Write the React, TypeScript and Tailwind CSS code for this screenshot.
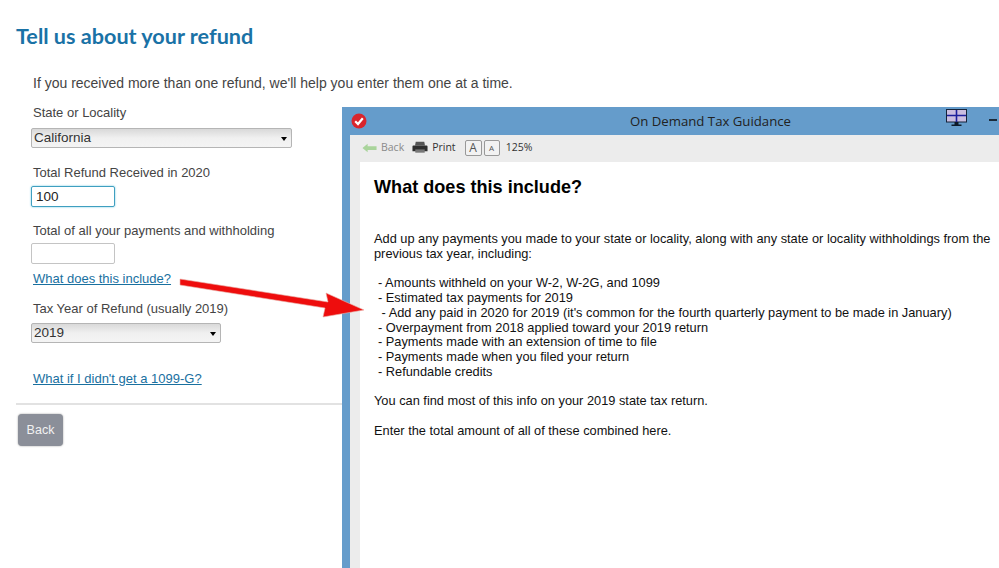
import React from 'react';

const arial = "font-['Liberation_Sans',Arial,sans-serif]";

function SelectBox({ value, width }: { value: string; width: string }) {
  return (
    <div className={`${width} h-[20px] flex items-center justify-between pl-[2px] pr-[4px] pt-[1px] rounded-[2px] border border-[#b5b5b5] bg-gradient-to-b from-[#d9d9d9] via-[#f0f0f0] to-[#f4f4f4] text-[13.5px] text-[#333]`}>
      <span>{value}</span>
      <span className="w-0 h-0 border-x-[3.5px] border-x-transparent border-t-[4px] border-t-black" />
    </div>
  );
}

function RedArrow() {
  return (
    <svg className="absolute left-[170px] top-[270px]" width="205" height="60" viewBox="170 270 205 60">
      <polygon points="180,279 328,302 326,293 364,310 323,317 325,308 180,285" fill="#ee0d0d" stroke="#e9b0a8" strokeWidth="0.6" />
    </svg>
  );
}

function CheckBadge() {
  return (
    <svg width="16" height="16" viewBox="0 0 16 16">
      <circle cx="8" cy="8" r="7.5" fill="#d9252c" />
      <path d="M4.2 8.2 7 11 11.8 5.2" fill="none" stroke="#fff" strokeWidth="2.2" />
    </svg>
  );
}

function MonitorIcon() {
  return (
    <svg width="21" height="18" viewBox="0 0 21 18">
      <rect x="0.5" y="0.5" width="20" height="12.5" fill="#c9bde0" stroke="#15233a" />
      <path d="M10.5 1v12M1 6.5h19" stroke="#1b1f9c" strokeWidth="1.6" />
      <path d="M8.5 13h4v2.5h3V17h-10v-1.5h3z" fill="#0d1a2a" />
    </svg>
  );
}

function PrinterIcon() {
  return (
    <svg width="16" height="13" viewBox="0 0 17 13">
      <path d="M4 0.5h9l0.8 4H3.2z" fill="#555" />
      <path d="M1.5 4.5h14a1 1 0 0 1 1 1v5h-16v-5a1 1 0 0 1 1-1z" fill="#2f2f2f" />
      <rect x="3.5" y="8.5" width="10" height="3.5" fill="#777" />
    </svg>
  );
}

function BackArrow() {
  return (
    <svg width="15" height="10" viewBox="0 0 16 10">
      <path d="M0.5 5 6 0.5V3h9.5v4H6v2.5z" fill="#a9d49b" />
    </svg>
  );
}

const includes = [
  '- Amounts withheld on your W-2, W-2G, and 1099',
  '- Estimated tax payments for 2019',
  " - Add any paid in 2020 for 2019 (it's common for the fourth quarterly payment to be made in January)",
  '- Overpayment from 2018 applied toward your 2019 return',
  '- Payments made with an extension of time to file',
  '- Payments made when you filed your return',
  '- Refundable credits',
];

export default function App() {
  return (
    <div className={`relative flex w-[999px] h-[568px] overflow-hidden bg-white ${arial}`}>
      {/* formulario */}
      <div className="w-[342px] shrink-0 pl-[16px]">
        <h1 className="mt-[21px] font-['Lato',sans-serif] font-bold text-[21.6px] leading-[30px] text-[#1a72a6] whitespace-nowrap">
          Tell us about your refund
        </h1>
        <div className="pl-[17px] text-[#444]">
          <p className="mt-[23px] text-[14px] leading-[18px] whitespace-nowrap w-[500px]">
            If you received more than one refund, we'll help you enter them one at a time.
          </p>
          <label className="block mt-[12px] text-[13px] leading-[18px]">State or Locality</label>
          <div className="mt-[6px] -ml-[2px]">
            <SelectBox value="California" width="w-[261px]" />
          </div>
          <label className="block mt-[16px] text-[13px] leading-[18px]">Total Refund Received in 2020</label>
          <input
            readOnly
            value="100"
            className="block mt-[4px] -ml-[2px] w-[84px] h-[21px] px-[4px] rounded-[2px] border border-[#3f9fc0] shadow-[0_0_2px_#5fc3dc] text-[13.5px] text-[#222] outline-none"
          />
          <label className="block mt-[15px] text-[13px] leading-[18px]">Total of all your payments and withholding</label>
          <div className="mt-[3px] -ml-[2px] w-[84px] h-[21px] rounded-[2px] border border-[#c4c4c4]" />
          <a className="block mt-[6px] text-[13px] leading-[18px] text-[#19709f] underline">What does this include?</a>
          <label className="block mt-[12px] text-[13px] leading-[18px]">Tax Year of Refund (usually 2019)</label>
          <div className="mt-[5px] -ml-[2px]">
            <SelectBox value="2019" width="w-[190px]" />
          </div>
          <a className="block mt-[27px] text-[13px] leading-[18px] text-[#19709f] underline">What if I didn't get a 1099-G?</a>
        </div>
        <div className="mt-[15px] h-[2px] bg-[#e2e2e2]" />
        <button className="mt-[9px] ml-[2px] w-[45px] h-[32px] rounded-[4px] bg-[#8b8f99] text-[#f2f2f2] text-[12.5px] shadow-[0_0_2px_#999]">
          Back
        </button>
      </div>

      {/* ventana de ayuda */}
      <div className="flex-1 pt-[107px]">
        <div className="h-full w-[700px] bg-[#659ccb] pl-[8px]">
          <div className="h-[28px] relative flex items-center pl-[1px]">
            <CheckBadge />
            <span className="absolute left-[280px] top-[6px] text-[13.2px] leading-[16px] text-[#222] font-['Open_Sans',sans-serif]">
              On Demand Tax Guidance
            </span>
            <span className="absolute left-[596px] top-[2px]"><MonitorIcon /></span>
            <span className="absolute left-[639px] top-[12px] w-[8px] h-[2px] bg-[#1a2a3a]" />
          </div>
          <div className="h-[27px] bg-[#ececec] flex items-center pl-[12px] pb-[2px] text-[10.5px] font-['Open_Sans',sans-serif]">
            <BackArrow />
            <span className="ml-[4px] text-[#8a8a8a]">Back</span>
            <span className="ml-[8px]"><PrinterIcon /></span>
            <span className="ml-[4px] text-[#333]">Print</span>
            <span className="ml-[9px] w-[17px] h-[16px] flex items-center justify-center border border-[#999] rounded-[2px] bg-[#f2f2f2] text-[12px] text-[#555]">A</span>
            <span className="ml-[2px] w-[16px] h-[16px] flex items-center justify-center border border-[#999] rounded-[2px] bg-[#f2f2f2] text-[8px] text-[#555]">A</span>
            <span className="ml-[6px] text-[#333]">125%</span>
          </div>
          <div className="h-full bg-[#ececec] pl-[10px]">
            <div className={`h-full bg-white pl-[14px] pt-[15px] text-[12.8px] leading-[14.7px] text-[#111] ${arial}`}>
              <h2 className="text-[18.1px] leading-[20px] font-bold text-black">What does this include?</h2>
              <p className="mt-[35px] w-[625px]">
                Add up any payments you made to your state or locality, along with any state or locality withholdings from the previous tax year, including:
              </p>
              <ul className="mt-[15px] pl-[4px] whitespace-pre">
                {includes.map((line) => (
                  <li key={line}>{line}</li>
                ))}
              </ul>
              <p className="mt-[15px]">You can find most of this info on your 2019 state tax return.</p>
              <p className="mt-[15px]">Enter the total amount of all of these combined here.</p>
            </div>
          </div>
        </div>
      </div>

      <RedArrow />
    </div>
  );
}
